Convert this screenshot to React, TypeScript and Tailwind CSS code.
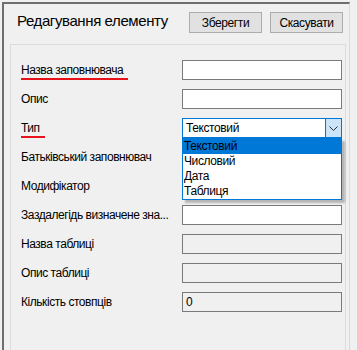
import React from "react";

const font = { fontFamily: '"Liberation Sans", Arial, sans-serif' };

function Row({
  label,
  underline,
  children,
}: {
  label: string;
  underline?: number;
  children: React.ReactNode;
}) {
  return (
    <div className="flex items-center h-[20px]">
      <div className="relative w-[161px] pr-[2px] text-[12px] leading-[14px] tracking-[-0.45px] text-black whitespace-nowrap">
        <div>{label}</div>
        {underline ? (
          <div
            className="absolute left-0 top-[15px] h-[2px] bg-[#e8121a]"
            style={{ width: underline }}
          />
        ) : null}
      </div>
      {children}
    </div>
  );
}

function Input({
  disabled,
  value,
}: {
  disabled?: boolean;
  value?: string;
}) {
  return (
    <div
      className={
        "w-[160px] h-[20px] border border-[#7a7a7a] text-[12px] leading-[18px] px-[3px] text-black " +
        (disabled ? "bg-[#f0f0f0]" : "bg-white")
      }
    >
      {value}
    </div>
  );
}

export default function App() {
  return (
    <div
      className="w-[357px] h-[350px] bg-[#f0f0f0] overflow-hidden"
      style={font}
    >
      <div className="ml-[2px] mt-[2px] w-[348px] h-[360px] border-l-2 border-t-2 border-r border-l-[#6e6e6e] border-t-[#6e6e6e] border-r-[#dadada] flex flex-col">
        <div className="h-[40px] flex items-start pt-[8px] pl-[13px] pr-[6px]">
          <div className="text-[15px] leading-[20px] mt-[-1px] tracking-[-0.4px] text-black flex-1">
            Редагування елементу
          </div>
          <button className="w-[73px] h-[21px] bg-[#e1e1e1] border border-[#adadad] text-[12px] leading-[18px] tracking-[-0.4px] text-black mr-[8px]">
            Зберегти
          </button>
          <button className="w-[73px] h-[21px] bg-[#e1e1e1] border border-[#adadad] text-[12px] leading-[18px] tracking-[-0.4px] text-black">
            Скасувати
          </button>
        </div>
        <div className="relative ml-[6px] w-[336px] flex-1 border-l border-t border-r border-[#dcdcdc] pt-[15px] pl-[10px] flex flex-col gap-[9px]">
          <Row label="Назва заповнювача" underline={107}>
            <Input />
          </Row>
          <Row label="Опис">
            <Input />
          </Row>
          <Row label="Тип" underline={24}>
            <div className="w-[160px] h-[20px] border border-[#0078d7] bg-white flex">
              <div className="flex-1 text-[12px] leading-[18px] px-[3px] tracking-[-0.4px] text-black">
                Текстовий
              </div>
              <div className="w-[16px] h-[18px] bg-[#cce4f7] border-l border-[#0078d7] flex items-center justify-center">
                <svg width="9" height="5" viewBox="0 0 9 5">
                  <path d="M0.5 0.5 L4.5 4.5 L8.5 0.5" fill="none" stroke="#333" strokeWidth="1" />
                </svg>
              </div>
            </div>
          </Row>
          <Row label="Батьківський заповнювач">
            <Input />
          </Row>
          <Row label="Модифікатор">
            <Input />
          </Row>
          <Row label="Заздалегідь визначене зна...">
            <Input />
          </Row>
          <Row label="Назва таблиці">
            <Input disabled />
          </Row>
          <Row label="Опис таблиці">
            <Input disabled />
          </Row>
          <Row label="Кількість стовпців">
            <Input disabled value="0" />
          </Row>

          <div className="absolute left-[171px] top-[93px] w-[160px] h-[62px] border border-[#0078d7] bg-white shadow-[3px_3px_2px_rgba(0,0,0,0.25)] text-[12px] tracking-[-0.4px] text-black">
            <div className="h-[15px] leading-[15px] px-[1px] bg-[#0078d7]">Текстовий</div>
            <div className="h-[15px] leading-[15px] px-[1px]">Числовий</div>
            <div className="h-[15px] leading-[15px] px-[1px]">Дата</div>
            <div className="h-[15px] leading-[15px] px-[1px]">Таблиця</div>
          </div>
        </div>
      </div>
    </div>
  );
}
